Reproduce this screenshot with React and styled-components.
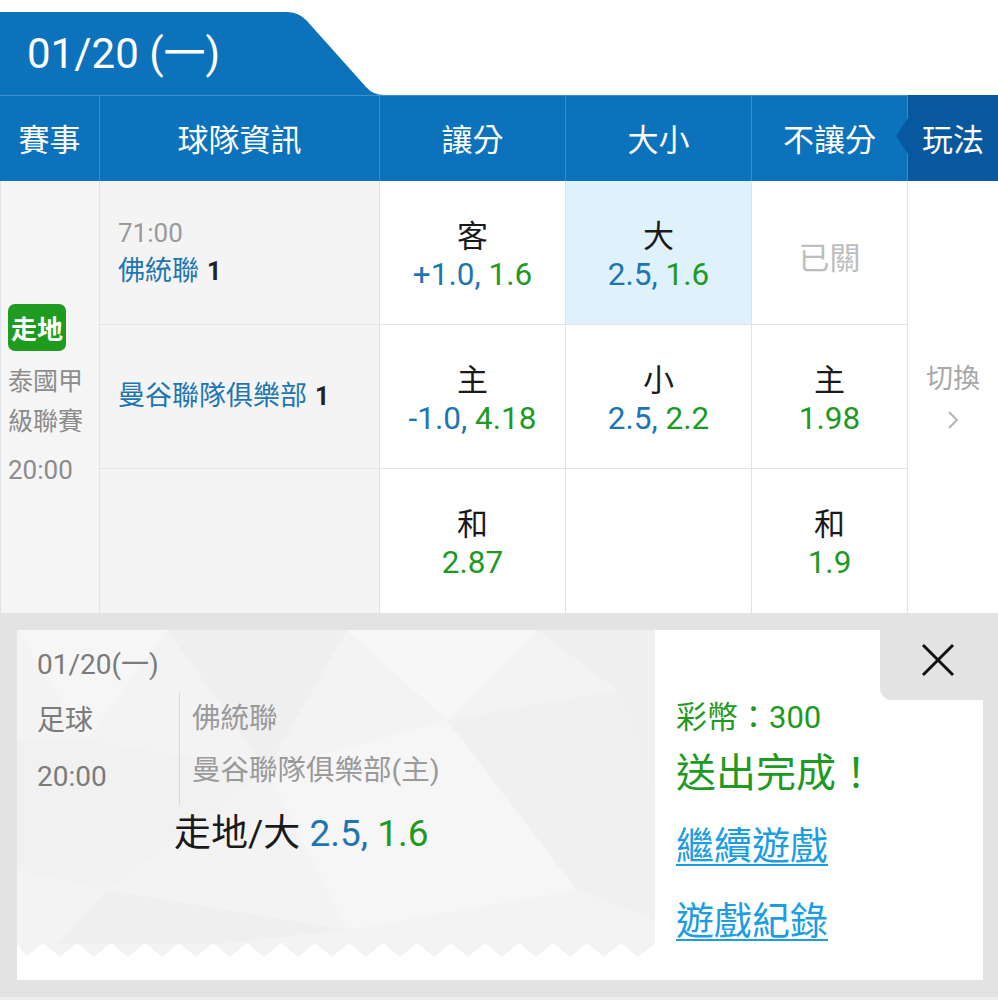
import React from 'react';
import styled, { createGlobalStyle, css } from 'styled-components';

const GlobalStyle = createGlobalStyle`
  html, body { margin: 0; padding: 0; background: #fff; }
  body {
    width: 998px;
    font-family: Roboto, "Noto Sans CJK TC", "Noto Sans", sans-serif;
    -webkit-font-smoothing: antialiased;
  }
  * { box-sizing: border-box; }
`;

const BLUE = '#0b72bb';
const DARK_BLUE = '#07589f';
const LINE = '#dde5ec';
const TXT_BLUE = '#1d76b2';
const TXT_GREEN = '#1e9a22';
const COLS = '100px 280px 186px 186px 156px 90px';

const Page = styled.div`
  width: 998px;
  background: #fff;
`;

const TopBar = styled.div`
  height: 95px;
  display: flex;
  align-items: flex-end;
`;

const DateTab = styled.div`
  position: relative;
  width: 384px;
  height: 83px;
  display: flex;
  align-items: center;
  padding: 0 0 8px 27px;
  color: #fff;
  font-size: 42px;
`;

const TabShape = styled.svg`
  position: absolute;
  left: 0;
  top: 0;
  width: 384px;
  height: 83px;
`;

const TabLabel = styled.span`
  position: relative;
`;

const HeaderRow = styled.div`
  display: grid;
  grid-template-columns: ${COLS};
  height: 86px;
  background: ${BLUE};
  box-shadow: inset 0 1px 0 #3d8ecb;
`;

const HeadCell = styled.div`
  position: relative;
  display: flex;
  align-items: center;
  justify-content: center;
  color: #fff;
  font-size: 31px;
  padding-bottom: 2px;
  border-right: 1px solid #3e8dc8;
  ${(p) =>
    p.$dark &&
    css`
      background: ${DARK_BLUE};
      border-right: none;
      &::before {
        content: '';
        position: absolute;
        left: -12px;
        top: 50%;
        margin-top: -20px;
        border-style: solid;
        border-width: 18px 12px 18px 0;
        border-color: transparent ${DARK_BLUE} transparent transparent;
      }
    `}
`;

const Board = styled.div`
  display: grid;
  grid-template-columns: ${COLS};
  grid-template-rows: repeat(3, 144px);
`;

const LeagueCell = styled.div`
  grid-column: 1;
  grid-row: 1 / span 3;
  background: #f5f5f5;
  border-left: 1px solid ${LINE};
  border-right: 1px solid ${LINE};
  display: flex;
  flex-direction: column;
  justify-content: center;
  align-items: flex-start;
  padding-left: 7px;
`;

const LiveBadge = styled.div`
  width: 58px;
  height: 47px;
  border-radius: 7px;
  background: #1f9b1f;
  color: #fff;
  font-weight: 700;
  font-size: 26px;
  display: flex;
  align-items: center;
  justify-content: center;
`;

const LeagueName = styled.div`
  margin-top: 11px;
  color: #8c8c8c;
  font-size: 25px;
  line-height: 40px;
`;

const KickOff = styled.div`
  margin-top: 8px;
  color: #8c8c8c;
  font-size: 26px;
  line-height: 40px;
`;

const TeamCell = styled.div`
  background: #f4f4f4;
  border-right: 1px solid ${LINE};
  border-bottom: ${(p) => (p.$last ? 'none' : `1px solid ${LINE}`)};
  display: flex;
  flex-direction: column;
  justify-content: center;
  padding-left: 18px;
`;

const Clock = styled.div`
  color: #9a9a9a;
  font-size: 26px;
  line-height: 38px;
`;

const TeamName = styled.div`
  color: ${TXT_BLUE};
  font-size: 27px;
  line-height: 38px;
`;

const Score = styled.span`
  color: #222;
  font-weight: 700;
  font-size: 25px;
  margin-left: 8px;
`;

const OddsCell = styled.div`
  background: ${(p) => (p.$selected ? '#dff1fb' : '#fff')};
  border-right: 1px solid ${LINE};
  border-bottom: ${(p) => (p.$last ? 'none' : `1px solid ${LINE}`)};
  display: flex;
  flex-direction: column;
  align-items: center;
  justify-content: center;
  padding-top: 6px;
`;

const OddsLabel = styled.div`
  color: #1a1a1a;
  font-size: 31px;
  line-height: 38px;
`;

const OddsValue = styled.div`
  font-size: 31.5px;
  line-height: 38px;
`;

const Closed = styled.div`
  color: #bdbdbd;
  font-size: 31px;
`;

const Blue = styled.span`
  color: ${TXT_BLUE};
`;

const Green = styled.span`
  color: ${TXT_GREEN};
`;

const SwitchCell = styled.div`
  grid-column: 6;
  grid-row: 1 / span 3;
  background: #fff;
  display: flex;
  flex-direction: column;
  align-items: center;
  justify-content: center;
  color: #a8a8a8;
  font-size: 27px;
  line-height: 36px;
  gap: 12px;
  padding-bottom: 2px;
`;

const Panel = styled.div`
  background: #e3e3e3;
  padding: 17px 15px 17px 17px;
  border-bottom: 3px solid #eeeeee;
`;

const Card = styled.div`
  position: relative;
  display: flex;
  height: 350px;
  background: #fff;
`;

const Ticket = styled.div`
  position: relative;
  width: 638px;
  overflow: hidden;
  padding: 17px 0 0 20px;
`;

const TicketBg = styled.svg`
  position: absolute;
  left: 0;
  top: 0;
  width: 638px;
  height: 330px;
`;

const TicketContent = styled.div`
  position: relative;
`;

const TicketDate = styled.div`
  color: #7b7b7b;
  font-size: 28px;
  line-height: 36px;
`;

const InfoRow = styled.div`
  display: flex;
  margin-top: 10px;
`;

const SportCol = styled.div`
  width: 142px;
  color: #7b7b7b;
  font-size: 28px;
  line-height: 56px;
`;

const TeamsCol = styled.div`
  border-left: 1px solid #d8d8d8;
  padding-left: 12px;
  color: #9a9a9a;
  font-size: 28.5px;
  line-height: 52px;
`;

const BetLine = styled.div`
  margin: 6px 0 0 137px;
  color: #1a1a1a;
  font-size: 37px;
  line-height: 46px;
`;

const Result = styled.div`
  flex: 1;
  display: flex;
  flex-direction: column;
  align-items: flex-start;
  padding: 68px 0 0 21px;
`;

const Stake = styled.div`
  color: ${TXT_GREEN};
  font-size: 31px;
  line-height: 40px;
`;

const Done = styled.div`
  margin-top: 8px;
  color: ${TXT_GREEN};
  font-size: 40px;
  line-height: 56px;
`;

const Link = styled.a`
  color: #1c9de2;
  font-size: 38px;
  line-height: 50px;
  text-decoration: underline;
  text-decoration-thickness: 2px;
  text-underline-offset: 5px;
  margin-top: ${(p) => p.$gap}px;
  cursor: pointer;
`;

const CloseTab = styled.button`
  position: absolute;
  top: 0;
  right: 0;
  width: 103px;
  height: 70px;
  border: none;
  background: #e3e3e3;
  border-bottom-left-radius: 12px;
  display: flex;
  align-items: center;
  justify-content: center;
  padding: 0 0 10px 13px;
  cursor: pointer;
`;

function zigzag() {
  let d = 'M0 0 H638 V314 ';
  const period = 34;
  let x = 638;
  let down = true;
  while (x > 0) {
    x -= period / 2;
    d += `L${Math.max(x, 0)} ${down ? 327 : 313} `;
    down = !down;
  }
  d += 'Z';
  return d;
}

const OddsBox = ({ label, a, b, selected, last }) => (
  <OddsCell $selected={selected} $last={last}>
    {label && <OddsLabel>{label}</OddsLabel>}
    {(a || b) && (
      <OddsValue>
        {a && <Blue>{a}</Blue>}
        {b && <Green>{b}</Green>}
      </OddsValue>
    )}
  </OddsCell>
);

export default function App() {
  return (
    <Page>
      <GlobalStyle />
      <TopBar>
        <DateTab>
          <TabShape viewBox="0 0 384 83">
            <path d="M0 0 H286 Q299 0 307 9 L366 75 Q373 83 384 83 H0 Z" fill={BLUE} />
          </TabShape>
          <TabLabel>01/20 (一)</TabLabel>
        </DateTab>
      </TopBar>
      <HeaderRow>
        <HeadCell>賽事</HeadCell>
        <HeadCell>球隊資訊</HeadCell>
        <HeadCell>讓分</HeadCell>
        <HeadCell>大小</HeadCell>
        <HeadCell>不讓分</HeadCell>
        <HeadCell $dark>玩法</HeadCell>
      </HeaderRow>
      <Board>
        <LeagueCell>
          <LiveBadge>走地</LiveBadge>
          <LeagueName>
            泰國甲
            <br />
            級聯賽
          </LeagueName>
          <KickOff>20:00</KickOff>
        </LeagueCell>

        <TeamCell>
          <Clock>71:00</Clock>
          <TeamName>
            佛統聯<Score>1</Score>
          </TeamName>
        </TeamCell>
        <OddsBox label="客" a="+1.0, " b="1.6" />
        <OddsBox label="大" a="2.5, " b="1.6" selected />
        <OddsCell>
          <Closed>已關</Closed>
        </OddsCell>

        <SwitchCell>
          <span>切換</span>
          <svg width="14" height="22" viewBox="0 0 14 22">
            <path d="M3 3 L11 11 L3 19" fill="none" stroke="#b5b5b5" strokeWidth="2" />
          </svg>
        </SwitchCell>

        <TeamCell>
          <TeamName>
            曼谷聯隊俱樂部<Score>1</Score>
          </TeamName>
        </TeamCell>
        <OddsBox label="主" a="-1.0, " b="4.18" />
        <OddsBox label="小" a="2.5, " b="2.2" />
        <OddsBox label="主" b="1.98" />

        <TeamCell $last />
        <OddsBox label="和" b="2.87" last />
        <OddsCell $last />
        <OddsBox label="和" b="1.9" last />
      </Board>

      <Panel>
        <Card>
          <Ticket>
            <TicketBg viewBox="0 0 638 330">
              <path d={zigzag()} fill="#f3f3f3" />
              <polygon points="0,0 150,0 70,110" fill="#f6f6f6" />
              <polygon points="150,0 330,0 250,140" fill="#efefef" />
              <polygon points="330,0 520,0 430,90" fill="#f7f7f7" />
              <polygon points="520,0 638,0 638,160 600,60" fill="#efefef" />
              <polygon points="0,110 70,110 250,140 90,260 0,240" fill="#f1f1f1" />
              <polygon points="250,140 430,90 560,260 330,300" fill="#f6f6f6" />
              <polygon points="430,90 600,60 638,160 638,290 560,260" fill="#f0f0f0" />
              <polygon points="90,260 330,300 200,314 40,314" fill="#efefef" />
            </TicketBg>
            <TicketContent>
              <TicketDate>01/20(一)</TicketDate>
              <InfoRow>
                <SportCol>
                  足球
                  <br />
                  20:00
                </SportCol>
                <TeamsCol>
                  佛統聯
                  <br />
                  曼谷聯隊俱樂部(主)
                </TeamsCol>
              </InfoRow>
              <BetLine>
                走地/大 <Blue>2.5, </Blue>
                <Green>1.6</Green>
              </BetLine>
            </TicketContent>
          </Ticket>
          <Result>
            <Stake>彩幣：300</Stake>
            <Done>送出完成！</Done>
            <Link $gap={19}>繼續遊戲</Link>
            <Link $gap={25}>遊戲紀錄</Link>
          </Result>
          <CloseTab aria-label="close">
            <svg width="36" height="36" viewBox="0 0 36 36">
              <path d="M3 3 L33 33 M33 3 L3 33" stroke="#111" strokeWidth="3" />
            </svg>
          </CloseTab>
        </Card>
      </Panel>
    </Page>
  );
}
